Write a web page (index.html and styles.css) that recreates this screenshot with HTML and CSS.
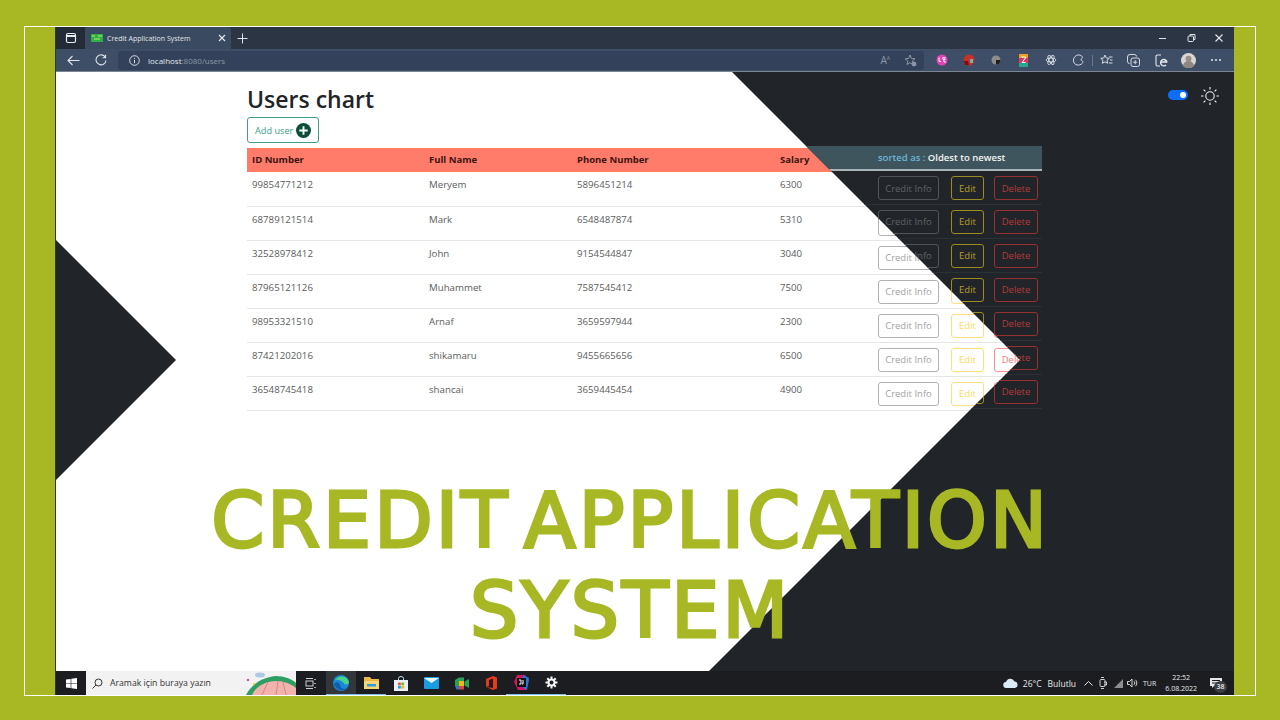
FILE: index.html
```html
<!DOCTYPE html>
<html>
<head>
    <title>Credit Application System</title>
    <link rel="stylesheet" href="styles.css">
</head>
<body>
    <div id="frame">
        <div id="screen">
            <!-- Browser tabs -->
            <div id="tab-strip">
                <div class="tab-actions">
                    <svg width="12" height="12" viewBox="0 0 12 12" fill="none" stroke="#e8ebef" stroke-width="1.2"><rect x="1.5" y="1.5" width="9" height="9" rx="1.5"/><path d="M1.5 4h9" stroke-width="2"/></svg>
                </div>
                <div class="tab">
                    <svg width="12" height="8" viewBox="0 0 12 8"><rect width="12" height="8" fill="#2fae4a"/><path d="M1 2h3M7 2h4M3 5h6" stroke="#8ce05c" stroke-width="1.4"/></svg>
                    <span class="tab-title">Credit Application System</span>
                    <svg width="8" height="8" viewBox="0 0 8 8" stroke="#e8ebef" stroke-width="1.1"><path d="M1 1l6 6M7 1l-6 6"/></svg>
                </div>
                <svg class="new-tab" width="11" height="11" viewBox="0 0 11 11" stroke="#e0e4ea" stroke-width="1"><path d="M5.5 0.5v10M0.5 5.5h10"/></svg>
                <div class="window-controls">
                    <svg width="28" height="10" viewBox="0 0 28 10" stroke="#dfe3e8"><path d="M10 5.5h7"/></svg>
                    <svg width="28" height="10" viewBox="0 0 28 10" fill="none" stroke="#dfe3e8"><rect x="11" y="3" width="5.5" height="5.5" rx="1"/><path d="M13 3V1.5h5v5h-1.500"/></svg>
                    <svg width="28" height="10" viewBox="0 0 28 10" stroke="#e8ebef" stroke-width="1.100"><path d="M10.500 1.500l7 7M17.500 1.500l-7 7"/></svg>
                </div>
            </div>

            <!-- Address bar and extensions -->
            <div id="toolbar">
                <svg class="nav-icon" width="13" height="11" viewBox="0 0 13 11" fill="none" stroke="#dfe4ea" stroke-width="1.1"><path d="M12.500 5.500H1M5.500 1L1 5.500 5.500 10"/></svg>
                <svg class="nav-icon" width="12" height="12" viewBox="0 0 12 12" fill="none" stroke="#dfe4ea" stroke-width="1.1"><path d="M10.300 3.200A5 5 0 1 0 11 6.500M10.500 0.800v2.900H7.600"/></svg>
                <div id="address-bar">
                    <svg width="11" height="11" viewBox="0 0 11 11" fill="none" stroke="#d8dde3"><circle cx="5.500" cy="5.500" r="4.800"/><path d="M5.500 4.800v3.400M5.500 2.800v1"/></svg>
                    <span class="url"><b>localhost</b>:8080/users</span>
                    <span class="read-aloud">A<sup>A</sup></span>
                    <svg width="13" height="13" viewBox="0 0 13 13" fill="none" stroke="#8d98a6"><path d="M6 1l1.500 3.500 3.500.3-2.700 2.300.8 3.400L6 8.700l-3 1.800.8-3.400L1.100 4.800l3.500-.3z"/><circle cx="10" cy="10" r="2" fill="#8d98a6"/></svg>
                </div>
                <div class="extensions">
                    <span class="ext"><svg width="12" height="12" viewBox="0 0 12 12"><circle cx="6" cy="6" r="5.500" fill="#e73fb4"/><path d="M3 3.500v4h2M7 3.500h2v2H7zM7 7h2v2" stroke="#fff" fill="none"/></svg></span>
                    <span class="ext"><svg width="12" height="12" viewBox="0 0 12 12"><circle cx="6" cy="6" r="5.500" fill="#c9302c"/><path d="M1 7h4l1 4H2z" fill="#7a0f10"/><path d="M7 5h3v4H7z" fill="#6fb3b0"/></svg></span>
                    <span class="ext"><svg width="10" height="10" viewBox="0 0 10 10"><circle cx="5" cy="5" r="4.500" fill="#8d8d8d"/><path d="M5 5h4.500A4.500 4.500 0 0 1 5 9.500z" fill="#1e1e1e"/></svg></span>
                    <span class="ext"><svg width="9" height="13" viewBox="0 0 9 13"><rect width="9" height="4" fill="#e9a12b"/><rect y="4" width="9" height="5" fill="#d93a63"/><rect y="9" width="9" height="4" fill="#2ca58d"/><path d="M2.500 3h4v1L3 8.500h3.500" stroke="#fff" fill="none"/></svg></span>
                    <span class="ext"><svg width="12" height="12" viewBox="0 0 12 12" fill="none" stroke="#d5dbe2" stroke-width="0.9"><ellipse cx="6" cy="6" rx="5" ry="2"/><ellipse cx="6" cy="6" rx="5" ry="2" transform="rotate(60 6 6)"/><ellipse cx="6" cy="6" rx="5" ry="2" transform="rotate(120 6 6)"/></svg></span>
                    <span class="ext"><svg width="12" height="12" viewBox="0 0 12 12" fill="none" stroke="#d5dbe2"><path d="M3 2.500C5 .5 8 .5 9.500 2a1.500 1.500 0 0 1 .5 2.500c-1 .5-1.500 1.500 0 2 1.500 1 .5 3-.5 3.500C7.500 11.500 4 11.500 2.500 9.500 1 7.500 1 4.500 3 2.500z"/></svg></span>
                    <span class="ext-separator"></span>
                    <span class="ext"><svg width="13" height="12" viewBox="0 0 13 12" fill="none" stroke="#d5dbe2"><path d="M5 1l1.300 3 3 .3-2.300 2 .7 3L5 7.800 2.300 9.300l.7-3-2.300-2 3-.3zM9 3h3.500M10 6h2.500M9 9h3.500"/></svg></span>
                    <span class="ext"><svg width="13" height="13" viewBox="0 0 13 13" fill="none" stroke="#d5dbe2"><rect x="4" y="4" width="8.500" height="8.500" rx="2"/><path d="M2.500 9.500A2 2 0 0 1 .5 7.500V3A2.500 2.500 0 0 1 3 .5h4.500a2 2 0 0 1 2 2M8.200 6.200v4M6.200 8.200h4"/></svg></span>
                    <span class="ext"><svg width="13" height="13" viewBox="0 0 13 13" fill="none" stroke="#e8ebef" stroke-width="1.100"><path d="M6 1H2.500A1.500 1.500 0 0 0 1 2.500v8A1.500 1.500 0 0 0 2.500 12H5"/><path d="M12 8.500a3.200 3.200 0 1 0-1 2.500M6 8h6" stroke-width="1.400"/></svg></span>
                    <span class="ext"><svg width="15" height="15" viewBox="0 0 15 15"><circle cx="7.500" cy="7.500" r="7.500" fill="#d9d6d2"/><circle cx="7.500" cy="5.800" r="3" fill="#9a8f88"/><path d="M2 13a5.500 5 0 0 1 11 0 7.500 7.500 0 0 1-11 0z" fill="#8e8880"/></svg></span>
                    <span class="ext"><svg width="12" height="4" viewBox="0 0 12 4" fill="#e5e8ec"><circle cx="2" cy="2" r="1"/><circle cx="6" cy="2" r="1"/><circle cx="10" cy="2" r="1"/></svg></span>
                </div>
            </div>

            <div id="page">
                <!-- Light theme -->
                <div class="theme theme-light">
                    <h1 class="page-title">Users chart</h1>
                    <button class="add-user">
                        Add user
                        <svg width="15" height="15" viewBox="0 0 16 16"><circle cx="8" cy="8" r="8" fill="#0b4f3a"/><path d="M8 3.500v9M3.500 8h9" stroke="#fff" stroke-width="2"/></svg>
                    </button>
                    <table class="users-table">
                        <colgroup>
                            <col class="col-id"><col class="col-name"><col class="col-phone"><col class="col-salary"><col>
                        </colgroup>
                        <thead>
                            <tr>
                                <th>ID Number</th>
                                <th>Full Name</th>
                                <th>Phone Number</th>
                                <th>Salary</th>
                                <th></th>
                            </tr>
                        </thead>
                        <tbody id="light-rows"></tbody>
                    </table>
                </div>

                <div class="corner-triangle"></div>

                <!-- Dark theme, cut along the diagonal -->
                <div class="theme theme-dark">
                    <div class="theme-switch">
                        <span class="toggle"></span>
                        <svg width="20" height="20" viewBox="0 0 20 20" fill="none" stroke="#f2f2f2" stroke-width="1.100"><circle cx="10" cy="10" r="4.200"/><path d="M10 1v2.500M10 16.500V19M1 10h2.500M16.500 10H19M3.600 3.600l1.800 1.800M14.600 14.600l1.800 1.800M3.600 16.400l1.800-1.800M14.600 5.400l1.800-1.800"/></svg>
                    </div>
                    <table class="users-table">
                        <colgroup>
                            <col class="col-id"><col class="col-name"><col class="col-phone"><col class="col-salary"><col>
                        </colgroup>
                        <thead>
                            <tr>
                                <th colspan="4"></th>
                                <th class="sorted"><span>sorted as :</span> Oldest to newest</th>
                            </tr>
                        </thead>
                        <tbody id="dark-rows"></tbody>
                    </table>
                </div>
            </div>

            <!-- Windows taskbar -->
            <div id="taskbar">
                <div class="start">
                    <svg width="11" height="11" viewBox="0 0 11 11" fill="#fff"><path d="M0 1.600L4.700.9v4.300H0zM5.300.8L11 0v5.200H5.300zM0 5.800h4.700v4.300L0 9.400zM5.300 5.800H11V11l-5.700-.8z"/></svg>
                </div>
                <div class="task-search">
                    <svg width="11" height="11" viewBox="0 0 11 11" fill="none" stroke="#333"><circle cx="6.500" cy="4.500" r="3.500"/><path d="M4 7l-3.500 3.500"/></svg>
                    <span>Aramak için buraya yazın</span>
                    <svg class="search-art" width="50" height="24" viewBox="0 0 50 24"><path d="M0 24C6 12 18 6 30 5c8 0 16 3 20 7v12z" fill="#2f9e63"/><path d="M6 24c4-9 14-14 24-14 8 0 15 3 20 7v7z" fill="#f2b2ad"/><path d="M16 24l6-13M30 24l2-14M40 24l-3-13" stroke="#d98582" fill="none"/><ellipse cx="14" cy="4" rx="5" ry="2.500" fill="#a9cbe4"/><circle cx="2" cy="9" r="1.200" fill="#e8489c"/><circle cx="8" cy="13" r="1" fill="#f0c419"/></svg>
                </div>
                <div class="task-icons">
                    <span class="task-icon">
                        <svg width="12" height="11" viewBox="0 0 12 11" fill="none" stroke="#cfcfcf"><path d="M1 .5h7M1 10.500h7"/><rect x="1" y="3" width="7" height="5"/><path d="M10 1v1M10 5v1M10 9v1" stroke-width="1.500"/></svg>
                    </span>
                    <span class="task-icon task-active">
                        <svg width="16" height="16" viewBox="0 0 16 16"><circle cx="8" cy="8" r="8" fill="#1b87d8"/><path d="M2 5c3-5 12-5 14 2 0 3-4 3-5 1.500C10 6 5 4 2 5z" fill="#46d48a"/><path d="M1 9c2-3 6-2 6 1s4 5 7 3c-4 4-11 2-13-4z" fill="#0c5fa8"/></svg>
                    </span>
                    <span class="task-icon task-open">
                        <svg width="15" height="13" viewBox="0 0 15 13"><path d="M0 1h6l1.500 2H15v2H0z" fill="#e9b949"/><rect y="5" width="15" height="8" fill="#f7d774"/><rect x="3" y="8" width="9" height="2.500" fill="#2e9bd6"/></svg>
                    </span>
                    <span class="task-icon">
                        <svg width="14" height="15" viewBox="0 0 14 15"><path d="M4.500 4V2.500a2.500 2 0 0 1 5 0V4" fill="none" stroke="#bfe4f5"/><rect y="4" width="14" height="11" fill="#e9f1f6"/><rect x="4" y="6.500" width="2.800" height="2.800" fill="#ef5a3c"/><rect x="7.300" y="6.500" width="2.800" height="2.800" fill="#7cb82f"/><rect x="4" y="9.800" width="2.800" height="2.800" fill="#1d9de2"/><rect x="7.300" y="9.800" width="2.800" height="2.800" fill="#f5b81c"/></svg>
                    </span>
                    <span class="task-icon">
                        <svg width="15" height="12" viewBox="0 0 15 12"><rect width="15" height="12" rx="1" fill="#1a9de0"/><path d="M0 1l7.500 5L15 1" fill="#e8f6fd"/></svg>
                    </span>
                    <span class="task-icon">
                        <svg width="15" height="13" viewBox="0 0 15 13"><path d="M1 3l4-2.500h5V4H5v5H1z" fill="#2b9f5a"/><path d="M5 4h5v5H5z" fill="#f3b51c"/><path d="M1 9h4v3.500H2.500z" fill="#2a78d4"/><path d="M5 9h5v3.500H5z" fill="#d8483a"/><path d="M10.500 4.500L15 2v9l-4.500-2.500z" fill="#2b9f5a"/></svg>
                    </span>
                    <span class="task-icon">
                        <svg width="11" height="14" viewBox="0 0 11 14"><path d="M0 3l7-3 4 1.500v11L7 14l-7-3 7 1V2.500L3 4v6l-3 1z" fill="#e8391b"/></svg>
                    </span>
                    <span class="task-icon task-open">
                        <svg width="15" height="15" viewBox="0 0 15 15"><path d="M3 0h8l4 6-3 9H4L0 7z" fill="#d6145f"/><path d="M9 0l6 3-2 12-5-3z" fill="#1f7ae0"/><rect x="3" y="3" width="9" height="9" fill="#111"/><path d="M5 5h2v4H5M9 5v4H8" stroke="#fff" fill="none"/></svg>
                    </span>
                    <span class="task-icon task-open">
                        <svg width="13" height="13" viewBox="0 0 13 13" fill="none" stroke="#f5f5f5"><circle cx="6.500" cy="6.500" r="3" stroke-width="2"/><path d="M6.500 .5v2.500M6.500 10v2.500M.5 6.500H3M10 6.500h2.500M2.300 2.300L4 4M9 9l1.700 1.700M2.300 10.700L4 9M9 4l1.700-1.700" stroke-width="2"/></svg>
                    </span>
                </div>
                <div class="tray">
                    <svg class="weather" width="15" height="10" viewBox="0 0 15 10"><path d="M3.500 10a3 3 0 0 1-.5-6A4.500 4.500 0 0 1 11.500 3.500 3.300 3.300 0 0 1 12 10z" fill="#dcebfa"/></svg>
                    <span class="tray-temp">26°C</span>
                    <span class="tray-weather">Bulutlu</span>
                    <svg class="tray-chevron" width="9" height="5" viewBox="0 0 9 5" fill="none" stroke="#e5e5e5"><path d="M.5 4.500l4-4 4 4"/></svg>
                    <svg class="tray-camera" width="8" height="12" viewBox="0 0 8 12" fill="none" stroke="#cfcfcf"><rect x="1" y="2.500" width="5" height="7" rx="1"/><path d="M2 .5h3M2 11.500h3M5 5h2.500v3H5"/></svg>
                    <svg class="tray-wifi" width="10" height="9" viewBox="0 0 10 9" fill="#8e8e8e"><path d="M0 9L9 0v9zM3 9V6"/></svg>
                    <svg width="11" height="10" viewBox="0 0 11 10" fill="none" stroke="#d8d8d8"><path d="M.5 3.500h2L5 1v8L2.500 6.500h-2zM7 3.200a2.500 2.500 0 0 1 0 3.600M8.500 1.800a4.500 4.500 0 0 1 0 6.400"/></svg>
                    <span class="tray-lang">TUR</span>
                    <div class="tray-clock">
                        <span>22:52</span>
                        <span>6.08.2022</span>
                    </div>
                    <div class="tray-notify">
                        <svg width="12" height="10" viewBox="0 0 12 10"><path d="M0 0h12v8H4L2 10V8H0z" fill="#e6e6e6"/><path d="M2 2.500h8M2 5h8" stroke="#1b1d21"/></svg>
                        <span class="notify-badge">38</span>
                    </div>
                </div>
            </div>

            <div id="slide-title">CREDIT APPLICATION<br>SYSTEM</div>
        </div>
    </div>

    <script src="script.js"></script>
</body>
</html>
```

FILE: styles.css
```css
/* Slide background and frame */
body {
    margin: 0;
    width: 1280px;
    height: 720px;
    overflow: hidden;
    background: #a8b825;
    font-family: "Open Sans", Arial, sans-serif;
}

#frame {
    box-sizing: border-box;
    width: 1232px;
    height: 670px;
    margin: 26px 0 0 24px;
    padding-left: 30px;
    padding-right: 21px;
    border: 1px solid #fff;
}

#screen {
    position: relative;
    display: flex;
    flex-direction: column;
    height: 100%;
    border-left: 1px solid #33361f;
}

/* Browser tabs */
#tab-strip {
    display: flex;
    align-items: center;
    height: 22px;
    background: #2b3544;
}

.tab-actions {
    display: flex;
    align-items: center;
    justify-content: center;
    width: 29px;
    height: 100%;
    background: #232b36;
}

.tab {
    display: flex;
    align-items: center;
    box-sizing: border-box;
    width: 146px;
    height: 100%;
    padding: 0 5px 0 6px;
    background: #3a4a60;
    border-radius: 3px 3px 0 0;
}

.tab-title {
    flex: 1;
    margin-left: 4px;
    color: #e1e5ea;
    font-size: 7px;
}

.new-tab {
    margin-left: 6px;
}

.window-controls {
    display: flex;
    margin-left: auto;
    margin-right: 1px;
}

/* Toolbar */
#toolbar {
    display: flex;
    align-items: center;
    box-sizing: border-box;
    height: 23px;
    padding-left: 11px;
    background: #3d4e66;
    border-bottom: 1px solid #7d8794;
}

.nav-icon {
    margin-right: 15px;
}

#address-bar {
    display: flex;
    align-items: center;
    box-sizing: border-box;
    width: 806px;
    height: 19px;
    margin-left: -4px;
    padding: 0 7px 0 11px;
    background: #33425a;
    border-radius: 3px;
}

.url {
    flex: 1;
    margin-left: 8px;
    color: #8b97a6;
    font-size: 8px;
}

.url b {
    color: #e4e8ec;
    font-weight: 400;
}

.read-aloud {
    margin-right: 14px;
    color: #8d98a6;
    font-size: 10px;
}

.read-aloud sup {
    font-size: 5px;
}

.extensions {
    display: flex;
    align-items: center;
    margin-left: 4px;
}

.ext {
    display: flex;
    align-items: center;
    justify-content: center;
    width: 27.3px;
}

.ext-separator {
    width: 1px;
    height: 11px;
    background: #6a7685;
}

/* Page with the two themes */
#page {
    position: relative;
    flex: 1;
    background: #fff;
    overflow: hidden;
}

.theme {
    position: absolute;
    inset: 0;
    box-sizing: border-box;
    padding-left: 191px;
}

.theme-light {
    padding-top: 12px;
}

.theme-dark {
    background: #212529;
    clip-path: polygon(676px 0, 1178px 0, 1178px 599px, 653px 599px, 964px 288px);
}

.corner-triangle {
    position: absolute;
    inset: 0;
    background: #212529;
    clip-path: polygon(0 168px, 120px 288px, 0 408px);
}

.page-title {
    margin: 0 0 3px;
    color: #212529;
    font-size: 23px;
    font-weight: 600;
    line-height: 30px;
}

.add-user {
    display: flex;
    align-items: center;
    gap: 3px;
    box-sizing: border-box;
    width: 72px;
    height: 26px;
    margin-bottom: 5px;
    padding: 0 0 0 7px;
    color: #3aa08c;
    font-family: inherit;
    font-size: 9.2px;
    background: #fff;
    border: 1px solid #3aa08c;
    border-radius: 3px;
}

/* Users table */
.users-table {
    width: 795px;
    table-layout: fixed;
    border-collapse: collapse;
    font-size: 9.7px;
}

.col-id {
    width: 177px;
}

.col-name {
    width: 148px;
}

.col-phone {
    width: 203px;
}

.col-salary {
    width: 98px;
}

.users-table th {
    box-sizing: border-box;
    height: 24px;
    padding: 0 5px 1px;
    font-size: 9.5px;
    font-weight: 700;
    text-align: left;
}

.users-table td {
    box-sizing: border-box;
    height: 34px;
    padding: 0 5px;
    vertical-align: top;
    border-bottom: 1px solid #e6e6e6;
}

.users-table .cell-text {
    padding-top: 6px;
}

.theme-light th {
    color: #3a1512;
    background: #ff7b6a;
}

.theme-light td {
    color: #5c5c5c;
}

.theme-dark td {
    border-bottom-color: #2c3136;
}

.theme-dark th {
    height: 24px;
    padding-bottom: 0;
    background: #3e555e;
    border-bottom: 2px solid #a9b4b8;
}

.theme-dark th.sorted {
    color: #f4f4f4;
    font-size: 9.5px;
    font-weight: 600;
    white-space: nowrap;
}

.sorted span {
    color: #6cb6d8;
}

.theme-switch {
    display: flex;
    align-items: center;
    justify-content: flex-end;
    gap: 12px;
    height: 20px;
    margin-bottom: 40px;
    padding: 14px 14px 0 0;
}

.toggle {
    position: relative;
    width: 20px;
    height: 10px;
    margin-top: -3px;
    background: #0d6efd;
    border-radius: 5px;
}

.toggle::after {
    content: "";
    position: absolute;
    top: 2px;
    right: 2px;
    width: 6px;
    height: 6px;
    background: #fff;
    border-radius: 50%;
}

/* Row buttons */
.row-actions {
    display: flex;
    padding-top: 5px;
}

.row-btn {
    flex: none;
    box-sizing: border-box;
    height: 24px;
    padding: 0;
    font-family: inherit;
    font-size: 9.5px;
    background: transparent;
    border: 1px solid;
    border-radius: 3px;
}

.btn-credit {
    width: 61px;
    margin-right: 12px;
}

.btn-edit {
    width: 33px;
    margin-right: 10px;
}

.btn-delete {
    width: 44px;
}

.theme-light .btn-credit {
    color: #a3a3a3;
    border-color: #aeb2b6;
}

.theme-light .btn-edit {
    color: #ffd763;
    border-color: #ffdf80;
}

.theme-light .btn-delete {
    color: #f17a7a;
    border-color: #fb8f8f;
}

.theme-dark .btn-credit {
    color: #5e6368;
    border-color: #50555a;
}

.theme-dark .btn-edit {
    color: #b89e22;
    border-color: #9c8c22;
}

.theme-dark .btn-delete {
    color: #b33a3a;
    border-color: #983232;
}

/* Slide heading on top of the screenshot */
#slide-title {
    position: absolute;
    top: 449px;
    left: 0;
    width: 1149px;
    color: #a8b825;
    font-family: "DejaVu Sans", sans-serif;
    font-size: 76px;
    line-height: 90px;
    letter-spacing: 3px;
    word-spacing: -14px;
    text-align: center;
    -webkit-text-stroke: 3px #a8b825;
}

/* Taskbar */
#taskbar {
    display: flex;
    align-items: center;
    height: 24px;
    color: #e8e8e8;
    background: #1b1d21;
}

.start {
    display: flex;
    align-items: center;
    justify-content: center;
    width: 30px;
}

.task-search {
    display: flex;
    align-items: center;
    box-sizing: border-box;
    width: 210px;
    height: 100%;
    padding-left: 6px;
    overflow: hidden;
    color: #333;
    font-size: 8.7px;
    background: #f2f2f2;
}

.task-search span {
    flex: 1;
    margin-left: 7px;
}

.search-art {
    flex-shrink: 0;
}

.task-icons {
    display: flex;
    height: 100%;
}

.task-icon {
    display: flex;
    align-items: center;
    justify-content: center;
    box-sizing: border-box;
    width: 30px;
    height: 100%;
}

.task-active {
    background: #33363a;
    border-bottom: 1px solid #7cc0ea;
}

.task-open {
    border-bottom: 1px solid #7cc0ea;
}

.tray {
    display: flex;
    align-items: center;
    margin-left: auto;
    padding-right: 6px;
    font-size: 8.5px;
}

.weather {
    margin-right: 5px;
}

.tray-weather {
    margin: 0 8px 0 6px;
}

.tray-chevron {
    margin-right: 6px;
}

.tray-camera {
    margin-right: 7px;
}

.tray-wifi {
    margin-right: 3px;
}

.tray-lang {
    margin: 0 9px 0 5px;
    font-size: 7px;
}

.tray-clock {
    display: flex;
    flex-direction: column;
    align-items: center;
    font-size: 7px;
    line-height: 11px;
}

.tray-notify {
    position: relative;
    display: flex;
    width: 18px;
    margin-left: 13px;
}

.notify-badge {
    position: absolute;
    top: 3px;
    left: 4px;
    width: 13px;
    height: 12px;
    color: #e8e8e8;
    font-size: 7px;
    font-weight: 600;
    line-height: 12px;
    text-align: center;
    background: #3a3d42;
    border-radius: 50%;
}
```

FILE: script.js
```js
// Sample user data
const users = [
    { id: "99854771212", name: "Meryem", phone: "5896451214", salary: 6300 },
    { id: "68789121514", name: "Mark", phone: "6548487874", salary: 5310 },
    { id: "32528978412", name: "John", phone: "9154544847", salary: 3040 },
    { id: "87965121126", name: "Muhammet", phone: "7587545412", salary: 7500 },
    { id: "98953321510", name: "Arnaf", phone: "3659597944", salary: 2300 },
    { id: "87421202016", name: "shikamaru", phone: "9455665656", salary: 6500 },
    { id: "36548745418", name: "shancai", phone: "3659445454", salary: 4900 }
];

const actions = `
    <div class="row-actions">
        <button class="row-btn btn-credit">Credit Info</button>
        <button class="row-btn btn-edit">Edit</button>
        <button class="row-btn btn-delete">Delete</button>
    </div>`;

// Light table gets the data, the dark one only shows the buttons
document.getElementById("light-rows").innerHTML = users.map(user => `
    <tr>
        <td class="cell-text">${user.id}</td>
        <td class="cell-text">${user.name}</td>
        <td class="cell-text">${user.phone}</td>
        <td class="cell-text">${user.salary}</td>
        <td>${actions}</td>
    </tr>`).join("");

document.getElementById("dark-rows").innerHTML = users.map(() => `
    <tr>
        <td colspan="4"></td>
        <td>${actions}</td>
    </tr>`).join("");
```
